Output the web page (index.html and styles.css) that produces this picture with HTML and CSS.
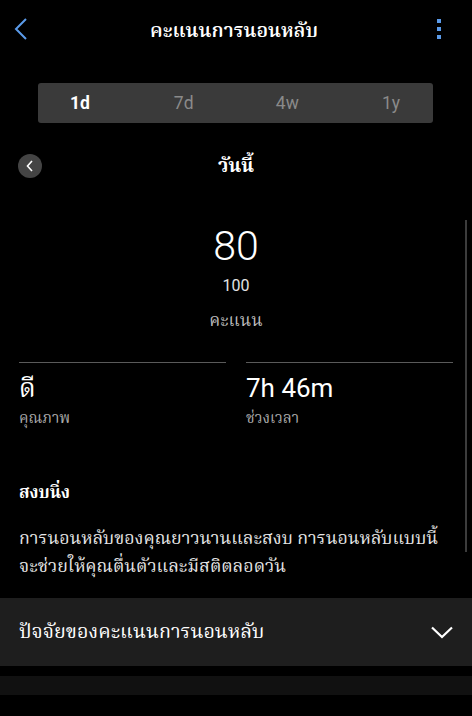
FILE: index.html
```html
<!DOCTYPE html>
<html lang="th">
<head>
  <meta charset="UTF-8">
  <title>คะแนนการนอนหลับ</title>
  <meta name="viewport" content="width=device-width, initial-scale=1.0">
  <link rel="stylesheet" href="styles.css">
</head>
<body>
  <header class="topbar">
    <button class="back" aria-label="back">
      <svg width="14" height="22" viewBox="0 0 14 22"><path d="M12 1 L2 11 L12 21" fill="none" stroke="#5b9bea" stroke-width="2"/></svg>
    </button>
    <h1>คะแนนการนอนหลับ</h1>
    <button class="more" aria-label="more">
      <span></span><span></span><span></span>
    </button>
  </header>

  <nav class="tabs">
    <button class="active">1d</button>
    <button>7d</button>
    <button>4w</button>
    <button>1y</button>
  </nav>

  <main class="content">
    <div class="day">
      <button class="prev" aria-label="previous">
        <svg width="8" height="12" viewBox="0 0 8 12"><path d="M6 1 L1.5 6 L6 11" fill="none" stroke="#fff" stroke-width="1.6"/></svg>
      </button>
      <h2>วันนี้</h2>
    </div>

    <section class="score">
      <div class="score-value">80</div>
      <div class="score-max">100</div>
      <div class="score-label">คะแนน</div>
    </section>

    <section class="stats">
      <div class="stat">
        <div class="stat-value">ดี</div>
        <div class="stat-label">คุณภาพ</div>
      </div>
      <div class="stat">
        <div class="stat-value">7h 46m</div>
        <div class="stat-label">ช่วงเวลา</div>
      </div>
    </section>

    <section class="summary">
      <h3>สงบนิ่ง</h3>
      <p>การนอนหลับของคุณยาวนานและสงบ การนอนหลับแบบนี้<br>จะช่วยให้คุณตื่นตัวและมีสติตลอดวัน</p>
    </section>

    <div class="scrollbar"></div>
  </main>

  <section class="factors">
    <span>ปัจจัยของคะแนนการนอนหลับ</span>
    <svg width="22" height="13" viewBox="0 0 22 13"><path d="M1 1.5 L11 11 L21 1.5" fill="none" stroke="#fff" stroke-width="2.2"/></svg>
  </section>
  <div class="next-card"></div>
</body>
</html>
```

FILE: styles.css
```css
* { margin: 0; padding: 0; box-sizing: border-box; }
body {
  font-family: Roboto, "Noto Serif Thai", "Noto Sans Thai", sans-serif;
  background: #000;
  color: #fff;
  width: 472px;
  height: 716px;
  overflow: hidden;
}
button { background: none; border: none; color: inherit; font: inherit; cursor: pointer; }

/* Top bar */
.topbar {
  height: 60px;
  display: flex;
  align-items: center;
  justify-content: space-between;
  padding: 0 28px 0 14px;
}
.topbar h1 { font-size: 19.5px; font-weight: 600; line-height: 28px; margin-top: 2px; }
.back { width: 20px; height: 24px; display: flex; align-items: center; margin-top: -2px; }
.more { display: flex; flex-direction: column; gap: 4px; width: 10px; align-items: center; margin-top: -2px; }
.more span { width: 4px; height: 4px; background: #5b9bea; }

/* Tabs */
.tabs {
  display: flex;
  justify-content: space-between;
  margin: 23px 39px 0 38px;
  padding: 0 12px;
  height: 40px;
  background: #3a3a3a;
  border-radius: 3px;
}
.tabs button { width: 60px; font-size: 17.5px; color: #8a8a8a; }
.tabs button.active { color: #fff; font-weight: 700; }

/* Content */
.content { position: relative; padding: 22px 19px 0; }
.day { position: relative; height: 42px; display: flex; align-items: center; justify-content: center; }
.day h2 { font-size: 19px; font-weight: 700; line-height: 28px; }
.prev {
  position: absolute;
  left: -1px;
  top: 9px;
  width: 24px;
  height: 24px;
  border-radius: 50%;
  background: #444;
  display: flex;
  align-items: center;
  justify-content: center;
}

.score { text-align: center; margin-top: 35px; }
.score-value { font-size: 41px; font-weight: 300; line-height: 48px; }
.score-max { font-size: 16px; line-height: 20px; margin-top: 6px; color: #e4e4e4; }
.score-label { font-size: 17.3px; line-height: 24px; margin-top: 12px; color: #bbb; }

.stats { display: flex; gap: 20px; margin-top: 30px; }
.stat { flex: 1; border-top: 1px solid #5a5a5a; padding-top: 9px; }
.stat-value { font-size: 26px; line-height: 32px; }
.stat-label { font-size: 15px; line-height: 20px; color: #aaa; margin-top: 4px; }

.summary { margin-top: 52px; }
.summary h3 { font-size: 17px; font-weight: 700; line-height: 24px; }
.summary p { font-size: 17.8px; line-height: 28px; color: #e6e6e6; margin-top: 20px; }

.scrollbar {
  position: absolute;
  right: 5px;
  top: 97px;
  width: 2px;
  height: 332px;
  background: #3c3c3c;
}

/* Factors */
.factors {
  margin-top: 18px;
  height: 68px;
  background: #1e1e1e;
  display: flex;
  align-items: center;
  justify-content: space-between;
  padding: 0 19px;
  font-size: 19.7px;
}
.factors span { line-height: 28px; }
.next-card { margin-top: 10px; height: 19px; background: #111; }
```
